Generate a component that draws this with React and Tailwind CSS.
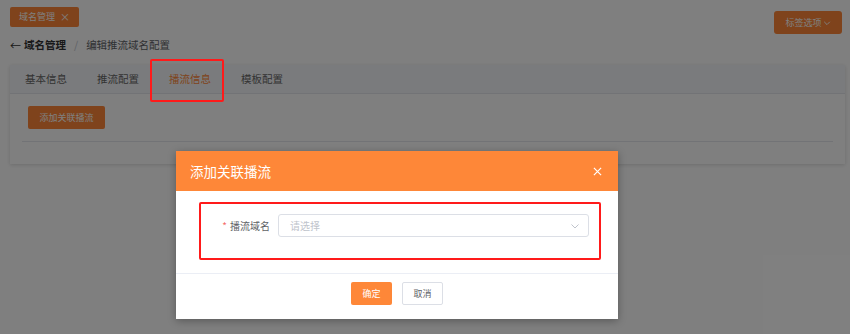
import React from 'react';

const font = { fontFamily: '"Noto Sans CJK SC", "Noto Sans", sans-serif' };

const tabs = ['基本信息', '推流配置', '播流信息', '模板配置'];

const App = () => {
  return (
    <div className="relative w-[850px] h-[334px] overflow-hidden bg-white" style={font}>
      {/* Page */}
      <div className="pl-[10px] pr-[5px] pt-[7px]">
        <div className="h-[20px] flex justify-between items-start">
          <div className="h-[20px] px-[9px] flex items-center gap-[5px] bg-[#fe8738] rounded-[2px] text-white text-[9px]">
            <span>域名管理</span>
            <span className="text-[10px] leading-none">×</span>
          </div>
          <div className="shrink-0 mt-[4px] mr-[3px] h-[23px] w-[68px] flex items-center justify-center gap-[1px] bg-[#fe8738] rounded-[3px] text-white text-[9px]">
            <span>标签选项</span>
            <svg width="8" height="8" viewBox="0 0 10 10" fill="none" stroke="white" strokeWidth="1.2">
              <path d="M1.5 3.5 L5 7 L8.5 3.5" />
            </svg>
          </div>
        </div>

        <div className="mt-[11px] h-[14px] flex items-center text-[10.5px] leading-[14px]">
          <span className="text-[#333] mr-[3px] text-[11px]">←</span>
          <span className="text-[#303133] font-bold text-[10.5px]">域名管理</span>
          <span className="text-[#c0c4cc] mx-[8px]">/</span>
          <span className="text-[#606266]">编辑推流域名配置</span>
        </div>

        <div className="mt-[13px] bg-white shadow-[0_1px_4px_rgba(0,0,0,0.15)]">
          <div className="h-[29px] flex bg-[#f5f7fa] border-b border-[#e4e7ed]">
            {tabs.map((t, i) => (
              <div
                key={t}
                className={`h-full px-[15px] flex items-center text-[10.5px] ${i === 2 ? 'text-[#fe8738]' : 'text-[#666]'}`}
              >
                {t}
              </div>
            ))}
          </div>
          <div className="pt-[12px] pb-[22px]">
            <div className="ml-[18px] w-[77px] h-[23px] flex items-center justify-center bg-[#fe8738] rounded-[2px] text-white text-[9px]">
              添加关联播流
            </div>
            <div className="mt-[12px] mx-[12px] h-px bg-[#e4e7ed]" />
          </div>
        </div>
      </div>

      {/* Overlay */}
      <div className="absolute inset-0 bg-black/50" />

      {/* Tab annotation */}
      <div className="absolute left-[150px] top-[59px] w-[74px] h-[43px] border-2 border-[#ff1a1a] rounded-[2px]" />

      {/* Dialog */}
      <div className="absolute left-[176px] top-[151px] w-[442px] h-[168px] bg-white shadow-[0_2px_8px_rgba(0,0,0,0.3)] flex flex-col">
        <div className="h-[40px] bg-[#fe8738] flex items-center justify-between pl-[14px] pr-[16px]">
          <span className="text-white text-[13.5px]">添加关联播流</span>
          <svg width="9" height="9" viewBox="0 0 10 10" stroke="white" strokeWidth="1.3">
            <path d="M1 1 L9 9 M9 1 L1 9" />
          </svg>
        </div>
        <div className="pt-[11px] pl-[23px]">
          <div className="w-[402px] h-[58px] border-2 border-[#ff1a1a] rounded-[2px] pt-[10px]">
            <div className="flex items-center">
              <div className="w-[77px] flex justify-end items-center pr-[8px] text-[10px] text-[#606266]">
                <span className="text-[#f56c6c] mr-[3px]">*</span>
                <span>播流域名</span>
              </div>
              <div className="w-[311px] h-[23px] border border-[#dcdfe6] rounded-[3px] flex items-center justify-between pl-[11px] pr-[8px]">
                <span className="text-[10px] text-[#c0c4cc]">请选择</span>
                <svg width="10" height="10" viewBox="0 0 10 10" fill="none" stroke="#c0c4cc" strokeWidth="1">
                  <path d="M1.5 3.5 L5 7 L8.5 3.5" />
                </svg>
              </div>
            </div>
          </div>
        </div>
        <div className="mt-[13px] h-px bg-[#ebeef5]" />
        <div className="pt-[8px] flex justify-center gap-[10px]">
          <div className="w-[41px] h-[23px] flex items-center justify-center bg-[#fe8738] rounded-[2px] text-white text-[9px]">
            确定
          </div>
          <div className="w-[41px] h-[23px] flex items-center justify-center border border-[#dcdfe6] rounded-[2px] text-[#606266] text-[9px]">
            取消
          </div>
        </div>
      </div>
    </div>
  );
};

export default App;
